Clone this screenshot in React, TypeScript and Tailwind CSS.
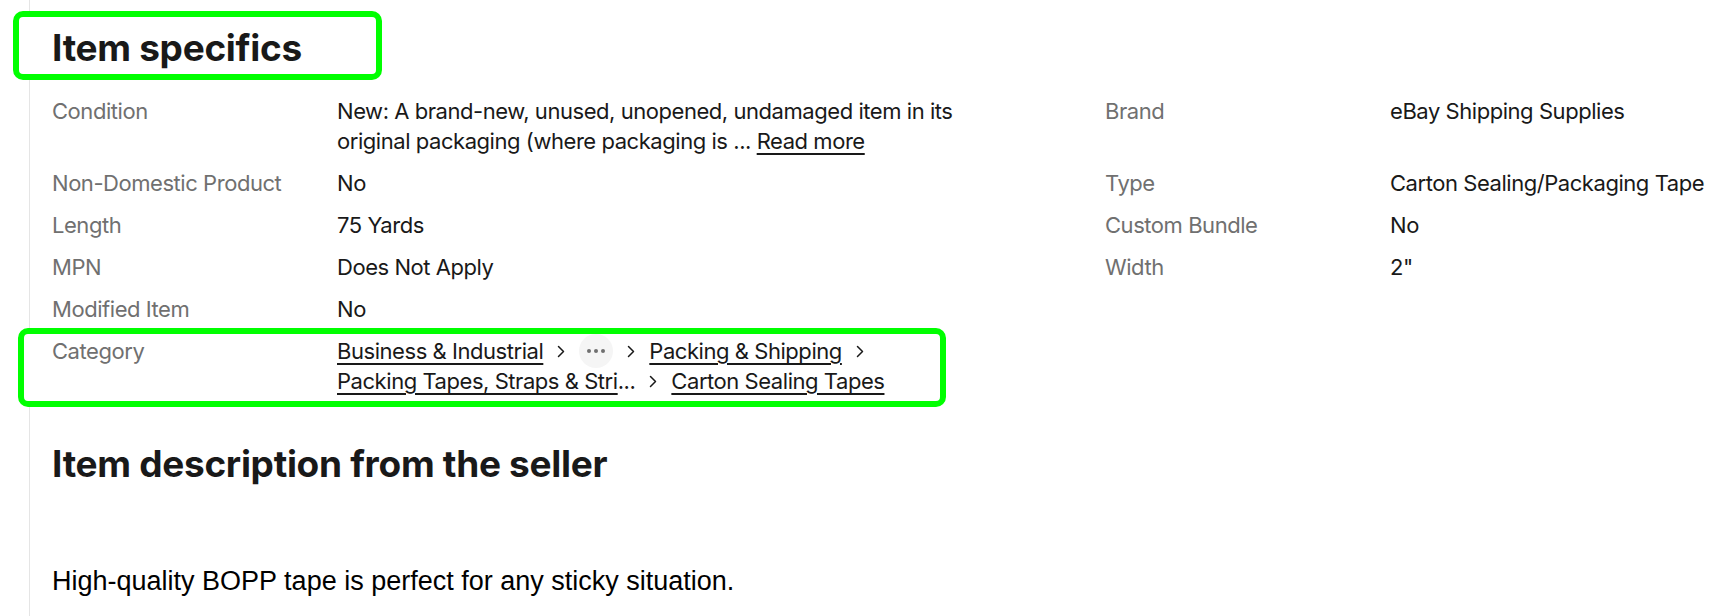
import type { ReactNode } from 'react';

type Spec = { label: string; value: ReactNode };

const rows: { left: Spec; right?: Spec }[] = [
  {
    left: {
      label: 'Condition',
      value: (
        <>
          New: A brand-new, unused, unopened, undamaged item in its
          <br />
          original packaging (where packaging is ...{' '}
          <a href="#" className="underline underline-offset-[4px] decoration-[1.5px]">
            Read more
          </a>
        </>
      ),
    },
    right: { label: 'Brand', value: 'eBay Shipping Supplies' },
  },
  {
    left: { label: 'Non-Domestic Product', value: 'No' },
    right: { label: 'Type', value: 'Carton Sealing/Packaging Tape' },
  },
  {
    left: { label: 'Length', value: '75 Yards' },
    right: { label: 'Custom Bundle', value: 'No' },
  },
  {
    left: { label: 'MPN', value: 'Does Not Apply' },
    right: { label: 'Width', value: '2"' },
  },
  { left: { label: 'Modified Item', value: 'No' } },
];

function Chevron() {
  return (
    <svg width="8" height="13" viewBox="0 0 8 13" className="mx-[14px] shrink-0" fill="none">
      <path d="M1.5 1.5 6.5 6.5 1.5 11.5" stroke="#191919" strokeWidth="1.5" strokeLinecap="round" strokeLinejoin="round" />
    </svg>
  );
}

function Pair({ spec }: { spec: Spec }) {
  return (
    <div className="flex">
      <div className="w-[285px] shrink-0 text-[#707070]">{spec.label}</div>
      <div className="text-[#191919]">{spec.value}</div>
    </div>
  );
}

const link = 'underline underline-offset-[4px] decoration-[1.5px] text-[#191919]';

export default function App() {
  return (
    <div className="min-h-[616px] bg-white pl-[29px] font-['Inter',sans-serif] text-[22px] leading-[30px] tracking-[-0.45px] text-[#191919]">
      <div className="min-h-[616px] border-l border-[#e5e5e5] pl-[22px] pt-[11px]">
        {/* Item specifics heading */}
        <div className="-ml-[39px] flex h-[69px] w-[369px] items-center rounded-[10px] border-[6px] border-[#00ff00] bg-white pl-[33px] pt-[5px]">
          <h2 className="text-[37px] font-bold leading-[44px] tracking-[-0.3px]">Item specifics</h2>
        </div>

        {/* Specs */}
        <div className="mt-[16px] flex flex-col gap-[12px]">
          {rows.map((row, i) => (
            <div key={i} className="flex">
              <div className="w-[1053px] shrink-0">
                <Pair spec={row.left} />
              </div>
              {row.right && <Pair spec={row.right} />}
            </div>
          ))}
        </div>

        {/* Category */}
        <div className="-ml-[34px] mt-[4px] w-[928px] rounded-[10px] border-[6px] border-[#00ff00] bg-white pb-[5px] pl-[28px] pt-[2px]">
          <div className="flex">
            <div className="w-[285px] shrink-0 text-[#707070]">Category</div>
            <div className="flex w-[600px] flex-wrap items-center">
              <span className="flex h-[30px] items-center">
                <a href="#" className={link}>Business &amp; Industrial</a>
                <Chevron />
              </span>
              <span className="flex h-[30px] items-center">
                <button className="-my-[2px] flex h-[34px] w-[34px] items-center justify-center gap-[3px] rounded-full bg-[#f5f5f5]">
                  <span className="h-[4px] w-[4px] rounded-full bg-[#707070]" />
                  <span className="h-[4px] w-[4px] rounded-full bg-[#707070]" />
                  <span className="h-[4px] w-[4px] rounded-full bg-[#707070]" />
                </button>
                <Chevron />
              </span>
              <span className="flex h-[30px] items-center">
                <a href="#" className={link}>Packing &amp; Shipping</a>
                <Chevron />
              </span>
              <span className="flex h-[30px] items-center">
                <a href="#" className={link}>Packing Tapes, Straps &amp; Stri</a>
                <span>...</span>
                <Chevron />
              </span>
              <span className="flex h-[30px] items-center">
                <a href="#" className={link}>Carton Sealing Tapes</a>
              </span>
            </div>
          </div>
        </div>

        {/* Description */}
        <h2 className="mt-[35px] text-[37px] font-bold leading-[44px] tracking-[-0.3px]">
          Item description from the seller
        </h2>
        <p className="mt-[79px] font-['Liberation_Sans',Arial,sans-serif] text-[27px] leading-[32px] tracking-normal text-black">
          High-quality BOPP tape is perfect for any sticky situation.
        </p>
      </div>
    </div>
  );
}
